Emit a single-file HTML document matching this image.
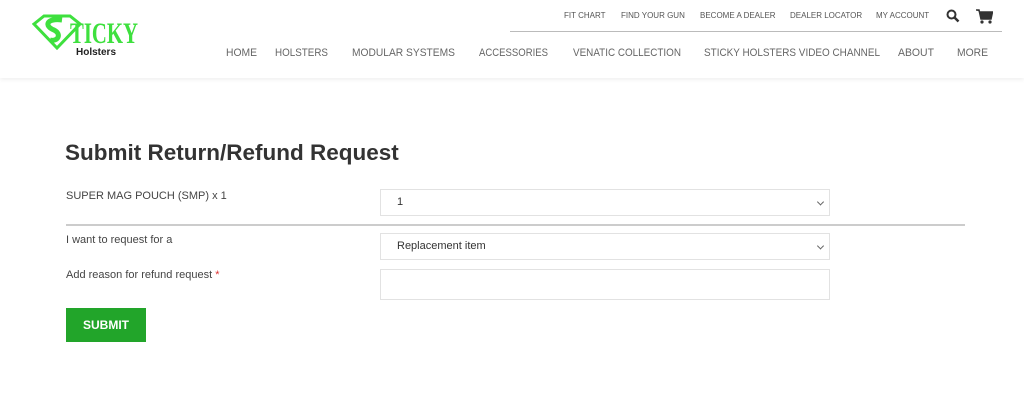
<!DOCTYPE html>
<html><head><style>
*{margin:0;padding:0;box-sizing:border-box}
body{width:1024px;height:408px;background:#fff;font-family:"Liberation Sans",Arial,sans-serif;position:relative;overflow:hidden}
.hdr{position:absolute;left:0;top:0;width:1024px;height:78px;background:#fff;box-shadow:0 2px 4px rgba(0,0,0,.06)}
.a{position:absolute;white-space:nowrap}
.top{font-size:8px;color:#555;top:11px}
.lbl{font-size:11px;color:#444;left:66px}
.box{position:absolute;left:380px;width:450px;border:1px solid #e2e2e2;background:#fff;font-size:11px;color:#333;padding-left:16px}
.chev{position:absolute;right:6px;top:50%;width:5px;height:5px;border-right:1px solid #666;border-bottom:1px solid #666;transform:translateY(-70%) rotate(45deg)}
</style></head><body>
<div class="hdr">
<svg class="a" style="left:32px;top:14px" width="50" height="36" viewBox="0 0 50 36"><path d="M2 10 L12 2 L38 2 L48 10 L25 34 Z" fill="none" stroke="#3ee03e" stroke-width="3"/><path d="M30 6 C14 4 12 12 22 16 C30 20 26 28 18 26" fill="none" stroke="#3ee03e" stroke-width="5"/></svg>
<svg class="a" style="left:0;top:0" width="160" height="50"><text x="70" y="43" textLength="68" lengthAdjust="spacingAndGlyphs" font-family="Liberation Serif, serif" font-size="30" font-weight="bold" fill="#3ee03e">TICKY</text></svg>
<div class="a" style="left:76px;top:47px;font-size:10px;font-weight:bold;color:#222">Holsters</div>
<div class="a top" style="left:564px">FIT CHART</div>
<div class="a top" style="left:621px">FIND YOUR GUN</div>
<div class="a top" style="left:700px">BECOME A DEALER</div>
<div class="a top" style="left:790px">DEALER LOCATOR</div>
<div class="a top" style="left:876px">MY ACCOUNT</div>
<svg class="a" style="left:946px;top:9px" width="14" height="14" viewBox="0 0 14 14"><circle cx="5.5" cy="5.5" r="4" fill="none" stroke="#333" stroke-width="2"/><path d="M8.5 8.5 L12.5 12.5" stroke="#333" stroke-width="2.5"/></svg>
<svg class="a" style="left:976px;top:9px" width="17" height="15" viewBox="0 0 17 15"><path d="M0 1 H3 L5 10 H15 L16.5 3 H4" fill="#333" stroke="#333" stroke-width="1.5"/><circle cx="6" cy="13" r="1.6" fill="#333"/><circle cx="14" cy="13" r="1.6" fill="#333"/></svg>
<div class="a" style="left:510px;top:31px;width:492px;height:1px;background:#bbb"></div>
<svg class="a" style="left:0;top:40px" width="1024" height="24" font-family="Liberation Sans, Arial, sans-serif" font-size="11" fill="#666">
<text x="226" y="16" textLength="31" lengthAdjust="spacingAndGlyphs">HOME</text>
<text x="275" y="16" textLength="53" lengthAdjust="spacingAndGlyphs">HOLSTERS</text>
<text x="352" y="16" textLength="103" lengthAdjust="spacingAndGlyphs">MODULAR SYSTEMS</text>
<text x="479" y="16" textLength="69" lengthAdjust="spacingAndGlyphs">ACCESSORIES</text>
<text x="573" y="16" textLength="108" lengthAdjust="spacingAndGlyphs">VENATIC COLLECTION</text>
<text x="704" y="16" textLength="176" lengthAdjust="spacingAndGlyphs">STICKY HOLSTERS VIDEO CHANNEL</text>
<text x="898" y="16" textLength="36" lengthAdjust="spacingAndGlyphs">ABOUT</text>
<text x="957" y="16" textLength="31" lengthAdjust="spacingAndGlyphs">MORE</text>
</svg>
</div>
<div class="a" style="left:65px;top:140px;font-size:22.5px;font-weight:bold;color:#333">Submit Return/Refund Request</div>
<div class="a lbl" style="top:190px">SUPER MAG POUCH (SMP) x 1</div>
<div class="box" style="top:189px;height:27px;line-height:25px">1<span class="chev"></span></div>
<div class="a" style="left:66px;top:224px;width:899px;height:2px;background:#ccc"></div>
<div class="a lbl" style="top:234px">I want to request for a</div>
<div class="box" style="top:233px;height:27px;line-height:25px">Replacement item<span class="chev"></span></div>
<div class="a lbl" style="top:269px">Add reason for refund request <span style="color:#d33">*</span></div>
<div class="box" style="top:269px;height:31px"></div>
<div class="a" style="left:66px;top:308px;width:80px;height:34px;background:#22a52a;color:#fff;font-weight:bold;font-size:12px;line-height:34px;text-align:center">SUBMIT</div>
</body></html>
